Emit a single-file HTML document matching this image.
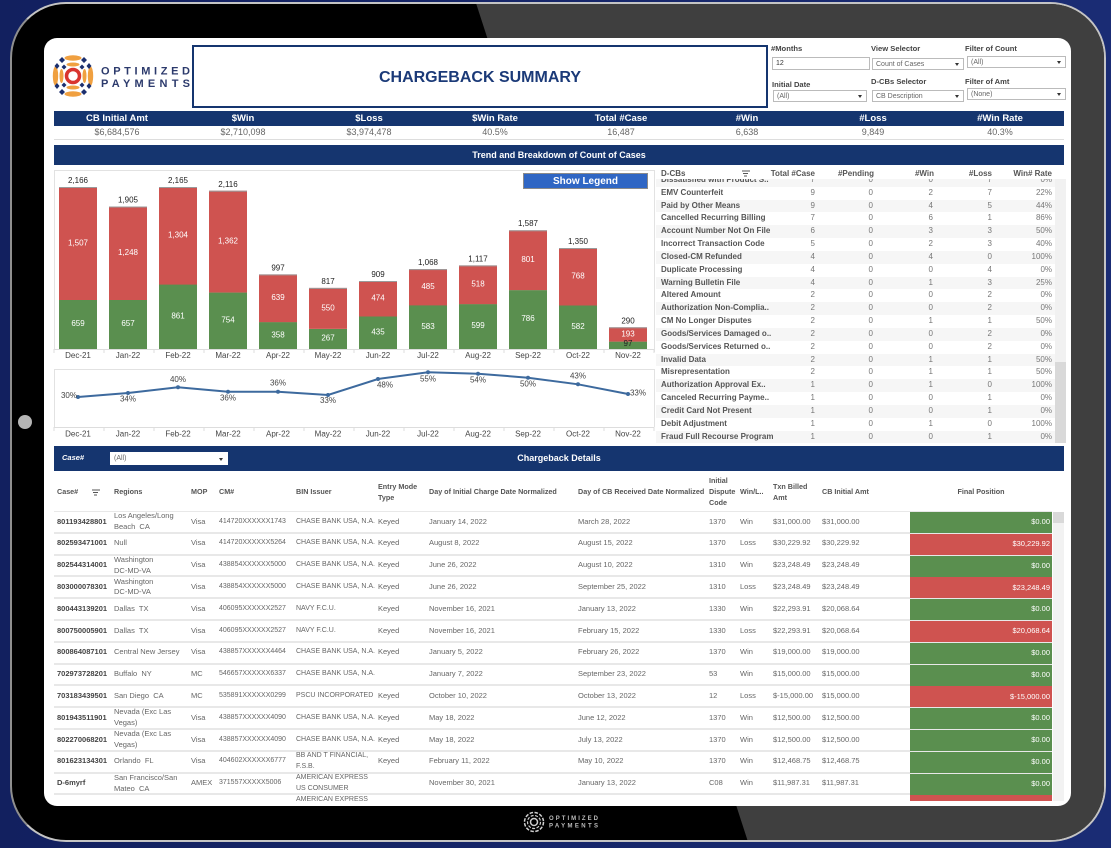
<!DOCTYPE html>
<html><head><meta charset="utf-8"><title>Chargeback Summary</title>
<style>
*{box-sizing:border-box}
html,body{margin:0;padding:0}
body{width:1111px;height:848px;overflow:hidden;position:relative;background:linear-gradient(90deg,#12205f,#1a2c74);font-family:"Liberation Sans",sans-serif;color:#555}
.a{position:absolute}
#tablet{left:10px;top:2px;width:1096px;height:840px;border-radius:56px;border:2.5px solid #c4c4c4;border-left-color:#8f8f8f;overflow:hidden;background:#000}
#screen{left:44px;top:38px;width:1027px;height:768px;background:#fff;border-radius:13px}
#ui{left:0;top:0;width:1111px;height:848px;filter:blur(.35px)}
.navy{background:#15356f;color:#fff}
.lbl{font-size:7.6px;font-weight:bold;color:#444;white-space:nowrap}
.sel{background:#fff;border:1px solid #bbb;font-size:7px;color:#666;padding-left:3px;white-space:nowrap;display:flex;align-items:center}
.sel:after{content:"";position:absolute;right:4px;top:50%;margin-top:-1px;border-left:2.5px solid transparent;border-right:2.5px solid transparent;border-top:3px solid #333}
.sel.n:after{display:none}
.k{top:111px;height:15px;line-height:15px;font-size:9.5px;font-weight:bold;color:#fff;text-align:center;width:126px}
.v{top:126px;height:12px;line-height:12px;font-size:9px;color:#666;text-align:center;width:126px}
.rt{left:656px;top:179px;width:399px;height:264px;overflow:hidden}
.rr{position:relative;height:12.83px;line-height:12.83px;font-size:8px;color:#777}
.rr b{position:absolute;left:5px;color:#555;white-space:nowrap}
.rr i{position:absolute;font-style:normal;text-align:right;width:30px}
.rr i:nth-of-type(1){left:129px}.rr i:nth-of-type(2){left:187px}.rr i:nth-of-type(3){left:247px}.rr i:nth-of-type(4){left:306px}.rr i:nth-of-type(5){left:366px}
.rr.s{background:#f6f6f6}
.rh{top:168px;height:11px;line-height:11px;font-size:8px;font-weight:bold;color:#555;text-align:right;white-space:nowrap}
.th{font-size:7.2px;font-weight:bold;color:#555;line-height:11px;display:flex;align-items:center;top:471px;height:41px;white-space:nowrap}
#rows{left:54px;top:512px;width:1010px;height:289px;overflow:hidden}
.d{position:absolute;left:0;width:998px;height:21.8px;font-size:7.5px;color:#666;line-height:10.7px;border-bottom:2px solid #e8e8e8}
.d span{position:absolute;top:0;height:20px;display:flex;align-items:center;white-space:nowrap}
.d .c1{left:3px;font-weight:bold;color:#444}.d .c2{left:60px}.d .c3{left:137px}.d .c4{left:165px;font-size:7px}.d .c5{left:242px;font-size:7px}.d .c6{left:324px}.d .c7{left:375px}.d .c8{left:524px}.d .c9{left:655px}.d .c10{left:686px}.d .c11{left:719px}.d .c12{left:768px}
.d .f{left:856px;width:142px;height:21px;justify-content:flex-end;padding-right:2px;color:#fff}
.g{background:#5a8f4f}.r{background:#cf5350}
svg text{font-family:"Liberation Sans",sans-serif;dominant-baseline:middle;text-anchor:middle}
</style></head>
<body>
<div class="a" id="tablet">
<svg class="a" style="left:-12.500px;top:-4.500px" width="1111" height="848"><polygon points="475,0 1111,0 1111,848 750,848" fill="#3f3f3f"/></svg>
</div>
<div class="a" style="left:18px;top:415px;width:14px;height:14px;border-radius:50%;background:#b5b5b5"></div>

<div class="a" id="screen"></div>
<div class="a" id="ui">

<!-- logo -->
<svg class="a" style="left:50px;top:52px" width="145" height="48" viewBox="50 52 145 48">
<g fill="#f0a040">
<ellipse cx="73" cy="58" rx="8.500" ry="2.700"/><ellipse cx="73" cy="94" rx="8.500" ry="2.700"/>
<ellipse cx="55.500" cy="76" rx="2.700" ry="9.500"/><ellipse cx="90.500" cy="76" rx="2.700" ry="9.500"/>
<ellipse cx="73" cy="64.500" rx="6.500" ry="2"/><ellipse cx="73" cy="87.500" rx="6.500" ry="2"/>
<ellipse cx="61.500" cy="76" rx="2" ry="7"/><ellipse cx="84.500" cy="76" rx="2" ry="7"/>
</g>
<g fill="#1c2f6e">
<path d="M62 57l3 3-3 3-3-3zM84 57l3 3-3 3-3-3zM57 63l2.500 3-2.500 3-2.500-3zM89 63l2.500 3-2.500 3-2.500-3zM57 83l2.500 3-2.500 3-2.500-3zM89 83l2.500 3-2.500 3-2.500-3zM62 89l3 3-3 3-3-3zM84 89l3 3-3 3-3-3zM64 64.500l2.500 2.500-2.500 2.500-2.500-2.500zM82 64.500l2.500 2.500-2.500 2.500-2.500-2.500zM64 82.500l2.500 2.500-2.500 2.500-2.500-2.500zM82 82.500l2.500 2.500-2.500 2.500-2.500-2.500z"/>
</g>
<circle cx="73" cy="76" r="6.500" fill="#fff" stroke="#d8342f" stroke-width="3.500"/>
<text x="101" y="71.500" style="text-anchor:start" font-size="11" font-weight="bold" fill="#2c3a6c" textLength="89" lengthAdjust="spacing">OPTIMIZED</text>
<text x="101" y="84" style="text-anchor:start" font-size="11" font-weight="bold" fill="#2c3a6c" textLength="89" lengthAdjust="spacing">PAYMENTS</text>
</svg>

<!-- title -->
<div class="a" style="left:192px;top:45px;width:576px;height:63px;border:2px solid #15356f;background:#fff;text-align:center;line-height:62px;font-size:16px;font-weight:bold;color:#1b3a78">CHARGEBACK SUMMARY</div>

<!-- filters -->
<div class="a lbl" style="left:771px;top:44px">#Months</div>
<div class="a sel n" style="left:772px;top:57px;width:98px;height:13px;color:#333">12</div>
<div class="a lbl" style="left:871px;top:44px">View Selector</div>
<div class="a sel" style="left:872px;top:58px;width:92px;height:12px">Count of Cases</div>
<div class="a lbl" style="left:965px;top:44px">Filter of Count</div>
<div class="a sel" style="left:967px;top:56px;width:99px;height:12px">(All)</div>
<div class="a lbl" style="left:772px;top:80px">Initial Date</div>
<div class="a sel" style="left:773px;top:90px;width:94px;height:12px">(All)</div>
<div class="a lbl" style="left:871px;top:77px">D-CBs Selector</div>
<div class="a sel" style="left:872px;top:90px;width:92px;height:12px">CB Description</div>
<div class="a lbl" style="left:965px;top:77px">Filter of Amt</div>
<div class="a sel" style="left:967px;top:88px;width:99px;height:12px">(None)</div>

<!-- KPI -->
<div class="a navy" style="left:54px;top:111px;width:1010px;height:15px"></div>
<div class="a" style="left:54px;top:139px;width:1010px;height:1px;background:#ddd"></div>
<div class="a k" style="left:54px">CB Initial Amt</div><div class="a v" style="left:54px">$6,684,576</div>
<div class="a k" style="left:180px">$Win</div><div class="a v" style="left:180px">$2,710,098</div>
<div class="a k" style="left:306px">$Loss</div><div class="a v" style="left:306px">$3,974,478</div>
<div class="a k" style="left:432px">$Win Rate</div><div class="a v" style="left:432px">40.5%</div>
<div class="a k" style="left:558px">Total #Case</div><div class="a v" style="left:558px">16,487</div>
<div class="a k" style="left:684px">#Win</div><div class="a v" style="left:684px">6,638</div>
<div class="a k" style="left:810px">#Loss</div><div class="a v" style="left:810px">9,849</div>
<div class="a k" style="left:937px">#Win Rate</div><div class="a v" style="left:937px">40.3%</div>

<div class="a navy" style="left:54px;top:145px;width:1010px;height:20px;line-height:20px;text-align:center;font-size:9px;font-weight:bold">Trend and Breakdown of Count of Cases</div>

<!-- charts -->
<svg class="a" style="left:0;top:0" width="1111" height="448">
<path d="M54.500 349V170.500H654.500V352M54.500 427V369.500H654.500V427" fill="none" stroke="#e2e2e2"/>
<path d="M54 349.500H654M54 427.500H654M54 349v4M104 349v4M154 349v4M204 349v4M254 349v4M304 349v4M354 349v4M404 349v4M454 349v4M504 349v4M554 349v4M604 349v4M654 349v4M54 427v4M104 427v4M154 427v4M204 427v4M254 427v4M304 427v4M354 427v4M404 427v4M454 427v4M504 427v4M554 427v4M604 427v4M654 427v4" stroke="#ddd" fill="none"/>
<g fill="#cf5350">
<rect x="59" y="187" width="38" height="113"/><rect x="109" y="206.500" width="38" height="93.500"/><rect x="159" y="187" width="38" height="98"/><rect x="209" y="190.700" width="38" height="102"/><rect x="259" y="274.400" width="38" height="48"/><rect x="309" y="287.900" width="38" height="41"/><rect x="359" y="281" width="38" height="36"/><rect x="409" y="269.100" width="38" height="36.500"/><rect x="459" y="265.400" width="38" height="39"/><rect x="509" y="230.300" width="38" height="60"/><rect x="559" y="248" width="38" height="57.500"/><rect x="609" y="327.300" width="38" height="14.500"/>
</g>
<g fill="#5a8f4f">
<rect x="59" y="300" width="38" height="49"/><rect x="109" y="300" width="38" height="49"/><rect x="159" y="284.600" width="38" height="64.400"/><rect x="209" y="292.600" width="38" height="56.400"/><rect x="259" y="322.200" width="38" height="26.800"/><rect x="309" y="329" width="38" height="20"/><rect x="359" y="316.500" width="38" height="32.500"/><rect x="409" y="305.400" width="38" height="43.600"/><rect x="459" y="304.200" width="38" height="44.800"/><rect x="509" y="290.200" width="38" height="58.800"/><rect x="559" y="305.500" width="38" height="43.500"/><rect x="609" y="341.700" width="38" height="7.300"/>
</g>
<g fill="#9a9a9a">
<rect x="59" y="187" width="38" height="1"/><rect x="109" y="206.500" width="38" height="1"/><rect x="159" y="187" width="38" height="1"/><rect x="209" y="190.700" width="38" height="1"/><rect x="259" y="274.400" width="38" height="1"/><rect x="309" y="287.900" width="38" height="1"/><rect x="359" y="281" width="38" height="1"/><rect x="409" y="269.100" width="38" height="1"/><rect x="459" y="265.400" width="38" height="1"/><rect x="509" y="230.300" width="38" height="1"/><rect x="559" y="248" width="38" height="1"/><rect x="609" y="327.300" width="38" height="1"/>
</g>
<g font-size="8" fill="#222">
<text x="78" y="181">2,166</text><text x="128" y="200.500">1,905</text><text x="178" y="181">2,165</text><text x="228" y="185">2,116</text><text x="278" y="268.500">997</text><text x="328" y="282">817</text><text x="378" y="275">909</text><text x="428" y="263">1,068</text><text x="478" y="259.500">1,117</text><text x="528" y="224">1,587</text><text x="578" y="242">1,350</text><text x="628" y="321.500">290</text><text x="628" y="343.700">97</text>
</g>
<g font-size="8" fill="#fff">
<text x="78" y="243.500">1,507</text><text x="128" y="253">1,248</text><text x="178" y="235.500">1,304</text><text x="228" y="241.500">1,362</text><text x="278" y="298">639</text><text x="328" y="308.500">550</text><text x="378" y="298.500">474</text><text x="428" y="287">485</text><text x="478" y="284.500">518</text><text x="528" y="260">801</text><text x="578" y="276.500">768</text><text x="628" y="334.500">193</text>
<text x="78" y="323.700">659</text><text x="128" y="323.700">657</text><text x="178" y="316.500">861</text><text x="228" y="320.500">754</text><text x="278" y="335.500">358</text><text x="328" y="338.500">267</text><text x="378" y="332.500">435</text><text x="428" y="327">583</text><text x="478" y="326">599</text><text x="528" y="319">786</text><text x="578" y="327">582</text>
</g>
<g font-size="8" fill="#444">
<text x="78" y="356">Dec-21</text><text x="128" y="356">Jan-22</text><text x="178" y="356">Feb-22</text><text x="228" y="356">Mar-22</text><text x="278" y="356">Apr-22</text><text x="328" y="356">May-22</text><text x="378" y="356">Jun-22</text><text x="428" y="356">Jul-22</text><text x="478" y="356">Aug-22</text><text x="528" y="356">Sep-22</text><text x="578" y="356">Oct-22</text><text x="628" y="356">Nov-22</text>
<text x="78" y="434.500">Dec-21</text><text x="128" y="434.500">Jan-22</text><text x="178" y="434.500">Feb-22</text><text x="228" y="434.500">Mar-22</text><text x="278" y="434.500">Apr-22</text><text x="328" y="434.500">May-22</text><text x="378" y="434.500">Jun-22</text><text x="428" y="434.500">Jul-22</text><text x="478" y="434.500">Aug-22</text><text x="528" y="434.500">Sep-22</text><text x="578" y="434.500">Oct-22</text><text x="628" y="434.500">Nov-22</text>
</g>
<polyline points="78,397 128,393 178,387.300 228,391.700 278,391.700 328,395 378,379 428,372.300 478,373.700 528,377.700 578,384.300 628,394" fill="none" stroke="#3d6a9e" stroke-width="2"/>
<g fill="#3d6a9e"><circle cx="78" cy="397" r="2"/><circle cx="128" cy="393" r="2"/><circle cx="178" cy="387.300" r="2"/><circle cx="228" cy="391.700" r="2"/><circle cx="278" cy="391.700" r="2"/><circle cx="328" cy="395" r="2"/><circle cx="378" cy="379" r="2"/><circle cx="428" cy="372.300" r="2"/><circle cx="478" cy="373.700" r="2"/><circle cx="528" cy="377.700" r="2"/><circle cx="578" cy="384.300" r="2"/><circle cx="628" cy="394" r="2"/></g>
<g font-size="8" fill="#444">
<text x="69" y="396">30%</text><text x="128" y="399.500">34%</text><text x="178" y="380">40%</text><text x="228" y="398.500">36%</text><text x="278" y="383.500">36%</text><text x="328" y="401">33%</text><text x="385" y="385.500">48%</text><text x="428" y="379.500">55%</text><text x="478" y="380.500">54%</text><text x="528" y="384.500">50%</text><text x="578" y="376.500">43%</text><text x="638" y="393.500">33%</text>
</g>
<rect x="523.500" y="173.500" width="124" height="15" fill="#2f66c4" stroke="#8a8a8a"/>
<text x="585.500" y="181.500" font-size="10" font-weight="bold" fill="#fff">Show Legend</text>
</svg>

<!-- right table -->
<div class="a rh" style="left:661px">D-CBs</div>
<svg class="a" style="left:742px;top:170px" width="9" height="8"><path d="M0 1h8M1 3.500h5M2 6h3" stroke="#555" fill="none"/></svg>
<div class="a rh" style="left:755px;width:60px">Total #Case</div>
<div class="a rh" style="left:815px;width:59px">#Pending</div>
<div class="a rh" style="left:880px;width:54px">#Win</div>
<div class="a rh" style="left:940px;width:52px">#Loss</div>
<div class="a rh" style="left:1000px;width:52px">Win# Rate</div>
<div class="a" style="left:1055px;top:179px;width:11px;height:264px;background:#f1f1f1"></div>
<div class="a" style="left:1055px;top:362px;width:11px;height:81px;background:#d9d9d9"></div>
<div class="a rt"><div style="margin-top:-5px">
<div class="rr s"><b>Dissatisfied with Product S..</b><i>7</i><i>0</i><i>0</i><i>7</i><i>0%</i></div>
<div class="rr"><b>EMV Counterfeit</b><i>9</i><i>0</i><i>2</i><i>7</i><i>22%</i></div>
<div class="rr s"><b>Paid by Other Means</b><i>9</i><i>0</i><i>4</i><i>5</i><i>44%</i></div>
<div class="rr"><b>Cancelled Recurring Billing</b><i>7</i><i>0</i><i>6</i><i>1</i><i>86%</i></div>
<div class="rr s"><b>Account Number Not On File</b><i>6</i><i>0</i><i>3</i><i>3</i><i>50%</i></div>
<div class="rr"><b>Incorrect Transaction Code</b><i>5</i><i>0</i><i>2</i><i>3</i><i>40%</i></div>
<div class="rr s"><b>Closed-CM Refunded</b><i>4</i><i>0</i><i>4</i><i>0</i><i>100%</i></div>
<div class="rr"><b>Duplicate Processing</b><i>4</i><i>0</i><i>0</i><i>4</i><i>0%</i></div>
<div class="rr s"><b>Warning Bulletin File</b><i>4</i><i>0</i><i>1</i><i>3</i><i>25%</i></div>
<div class="rr"><b>Altered Amount</b><i>2</i><i>0</i><i>0</i><i>2</i><i>0%</i></div>
<div class="rr s"><b>Authorization Non-Complia..</b><i>2</i><i>0</i><i>0</i><i>2</i><i>0%</i></div>
<div class="rr"><b>CM No Longer Disputes</b><i>2</i><i>0</i><i>1</i><i>1</i><i>50%</i></div>
<div class="rr s"><b>Goods/Services Damaged o..</b><i>2</i><i>0</i><i>0</i><i>2</i><i>0%</i></div>
<div class="rr"><b>Goods/Services Returned o..</b><i>2</i><i>0</i><i>0</i><i>2</i><i>0%</i></div>
<div class="rr s"><b>Invalid Data</b><i>2</i><i>0</i><i>1</i><i>1</i><i>50%</i></div>
<div class="rr"><b>Misrepresentation</b><i>2</i><i>0</i><i>1</i><i>1</i><i>50%</i></div>
<div class="rr s"><b>Authorization Approval Ex..</b><i>1</i><i>0</i><i>1</i><i>0</i><i>100%</i></div>
<div class="rr"><b>Canceled Recurring Payme..</b><i>1</i><i>0</i><i>0</i><i>1</i><i>0%</i></div>
<div class="rr s"><b>Credit Card Not Present</b><i>1</i><i>0</i><i>0</i><i>1</i><i>0%</i></div>
<div class="rr"><b>Debit Adjustment</b><i>1</i><i>0</i><i>1</i><i>0</i><i>100%</i></div>
<div class="rr s"><b>Fraud Full Recourse Program</b><i>1</i><i>0</i><i>0</i><i>1</i><i>0%</i></div>
</div></div>

<!-- details bar -->
<div class="a navy" style="left:54px;top:446px;width:1010px;height:25px;line-height:25px;text-align:center;font-size:9px;font-weight:bold">Chargeback Details</div>
<div class="a" style="left:62px;top:453px;font-size:7.5px;font-weight:bold;font-style:italic;color:#fff">Case#</div>
<div class="a sel" style="left:110px;top:452px;width:118px;height:13px;border-color:#fff">(All)</div>

<!-- details header -->
<div class="a th" style="left:57px">Case#</div>
<svg class="a" style="left:92px;top:489px" width="9" height="8"><path d="M0 1h8M1 3.500h5M2 6h3" stroke="#555" fill="none"/></svg>
<div class="a th" style="left:114px">Regions</div>
<div class="a th" style="left:191px">MOP</div>
<div class="a th" style="left:219px">CM#</div>
<div class="a th" style="left:296px">BIN Issuer</div>
<div class="a th" style="left:378px">Entry Mode<br>Type</div>
<div class="a th" style="left:429px">Day of Initial Charge Date Normalized</div>
<div class="a th" style="left:578px">Day of CB Received Date Normalized</div>
<div class="a th" style="left:709px">Initial<br>Dispute<br>Code</div>
<div class="a th" style="left:740px">Win/L..</div>
<div class="a th" style="left:773px">Txn Billed<br>Amt</div>
<div class="a th" style="left:822px">CB Initial Amt</div>
<div class="a th" style="left:910px;width:142px;justify-content:center">Final Position</div>
<div class="a" style="left:54px;top:511px;width:998px;height:1px;background:#e8e8e8"></div>

<div class="a" style="left:1053px;top:512px;width:11px;height:289px;background:#f2f2f2"></div>
<div class="a" style="left:1053px;top:512px;width:11px;height:11px;background:#d9d9d9"></div>

<div class="a" id="rows">
<div class="d" style="top:0"><span class="c1">801193428801</span><span class="c2">Los Angeles/Long<br>Beach&nbsp; CA</span><span class="c3">Visa</span><span class="c4">414720XXXXXX1743</span><span class="c5">CHASE BANK USA, N.A.</span><span class="c6">Keyed</span><span class="c7">January 14, 2022</span><span class="c8">March 28, 2022</span><span class="c9">1370</span><span class="c10">Win</span><span class="c11">$31,000.00</span><span class="c12">$31,000.00</span><span class="f g">$0.00</span></div>
<div class="d" style="top:21.800px"><span class="c1">802593471001</span><span class="c2">Null</span><span class="c3">Visa</span><span class="c4">414720XXXXXX5264</span><span class="c5">CHASE BANK USA, N.A.</span><span class="c6">Keyed</span><span class="c7">August 8, 2022</span><span class="c8">August 15, 2022</span><span class="c9">1370</span><span class="c10">Loss</span><span class="c11">$30,229.92</span><span class="c12">$30,229.92</span><span class="f r">$30,229.92</span></div>
<div class="d" style="top:43.600px"><span class="c1">802544314001</span><span class="c2">Washington<br>DC-MD-VA</span><span class="c3">Visa</span><span class="c4">438854XXXXXX5000</span><span class="c5">CHASE BANK USA, N.A.</span><span class="c6">Keyed</span><span class="c7">June 26, 2022</span><span class="c8">August 10, 2022</span><span class="c9">1310</span><span class="c10">Win</span><span class="c11">$23,248.49</span><span class="c12">$23,248.49</span><span class="f g">$0.00</span></div>
<div class="d" style="top:65.400px"><span class="c1">803000078301</span><span class="c2">Washington<br>DC-MD-VA</span><span class="c3">Visa</span><span class="c4">438854XXXXXX5000</span><span class="c5">CHASE BANK USA, N.A.</span><span class="c6">Keyed</span><span class="c7">June 26, 2022</span><span class="c8">September 25, 2022</span><span class="c9">1310</span><span class="c10">Loss</span><span class="c11">$23,248.49</span><span class="c12">$23,248.49</span><span class="f r">$23,248.49</span></div>
<div class="d" style="top:87.200px"><span class="c1">800443139201</span><span class="c2">Dallas&nbsp; TX</span><span class="c3">Visa</span><span class="c4">406095XXXXXX2527</span><span class="c5">NAVY F.C.U.</span><span class="c6">Keyed</span><span class="c7">November 16, 2021</span><span class="c8">January 13, 2022</span><span class="c9">1330</span><span class="c10">Win</span><span class="c11">$22,293.91</span><span class="c12">$20,068.64</span><span class="f g">$0.00</span></div>
<div class="d" style="top:109px"><span class="c1">800750005901</span><span class="c2">Dallas&nbsp; TX</span><span class="c3">Visa</span><span class="c4">406095XXXXXX2527</span><span class="c5">NAVY F.C.U.</span><span class="c6">Keyed</span><span class="c7">November 16, 2021</span><span class="c8">February 15, 2022</span><span class="c9">1330</span><span class="c10">Loss</span><span class="c11">$22,293.91</span><span class="c12">$20,068.64</span><span class="f r">$20,068.64</span></div>
<div class="d" style="top:130.800px"><span class="c1">800864087101</span><span class="c2">Central New Jersey</span><span class="c3">Visa</span><span class="c4">438857XXXXXX4464</span><span class="c5">CHASE BANK USA, N.A.</span><span class="c6">Keyed</span><span class="c7">January 5, 2022</span><span class="c8">February 26, 2022</span><span class="c9">1370</span><span class="c10">Win</span><span class="c11">$19,000.00</span><span class="c12">$19,000.00</span><span class="f g">$0.00</span></div>
<div class="d" style="top:152.600px"><span class="c1">702973728201</span><span class="c2">Buffalo&nbsp; NY</span><span class="c3">MC</span><span class="c4">546657XXXXXX6337</span><span class="c5">CHASE BANK USA, N.A.</span><span class="c7">January 7, 2022</span><span class="c8">September 23, 2022</span><span class="c9">53</span><span class="c10">Win</span><span class="c11">$15,000.00</span><span class="c12">$15,000.00</span><span class="f g">$0.00</span></div>
<div class="d" style="top:174.400px"><span class="c1">703183439501</span><span class="c2">San Diego&nbsp; CA</span><span class="c3">MC</span><span class="c4">535891XXXXXX0299</span><span class="c5">PSCU INCORPORATED</span><span class="c6">Keyed</span><span class="c7">October 10, 2022</span><span class="c8">October 13, 2022</span><span class="c9">12</span><span class="c10">Loss</span><span class="c11">$-15,000.00</span><span class="c12">$15,000.00</span><span class="f r">$-15,000.00</span></div>
<div class="d" style="top:196.200px"><span class="c1">801943511901</span><span class="c2">Nevada (Exc Las<br>Vegas)</span><span class="c3">Visa</span><span class="c4">438857XXXXXX4090</span><span class="c5">CHASE BANK USA, N.A.</span><span class="c6">Keyed</span><span class="c7">May 18, 2022</span><span class="c8">June 12, 2022</span><span class="c9">1370</span><span class="c10">Win</span><span class="c11">$12,500.00</span><span class="c12">$12,500.00</span><span class="f g">$0.00</span></div>
<div class="d" style="top:218px"><span class="c1">802270068201</span><span class="c2">Nevada (Exc Las<br>Vegas)</span><span class="c3">Visa</span><span class="c4">438857XXXXXX4090</span><span class="c5">CHASE BANK USA, N.A.</span><span class="c6">Keyed</span><span class="c7">May 18, 2022</span><span class="c8">July 13, 2022</span><span class="c9">1370</span><span class="c10">Win</span><span class="c11">$12,500.00</span><span class="c12">$12,500.00</span><span class="f g">$0.00</span></div>
<div class="d" style="top:239.800px"><span class="c1">801623134301</span><span class="c2">Orlando&nbsp; FL</span><span class="c3">Visa</span><span class="c4">404602XXXXXX6777</span><span class="c5">BB AND T FINANCIAL,<br>F.S.B.</span><span class="c6">Keyed</span><span class="c7">February 11, 2022</span><span class="c8">May 10, 2022</span><span class="c9">1370</span><span class="c10">Win</span><span class="c11">$12,468.75</span><span class="c12">$12,468.75</span><span class="f g">$0.00</span></div>
<div class="d" style="top:261.600px"><span class="c1">D-6myrf</span><span class="c2">San Francisco/San<br>Mateo&nbsp; CA</span><span class="c3">AMEX</span><span class="c4">371557XXXXX5006</span><span class="c5">AMERICAN EXPRESS<br>US CONSUMER</span><span class="c7">November 30, 2021</span><span class="c8">January 13, 2022</span><span class="c9">C08</span><span class="c10">Win</span><span class="c11">$11,987.31</span><span class="c12">$11,987.31</span><span class="f g">$0.00</span></div>
<div class="d" style="top:283.400px;border:0"><span class="c5" style="align-items:flex-start">AMERICAN EXPRESS</span><span class="f r"></span></div>
</div>

<!-- bottom logo -->
<svg class="a" style="left:520px;top:808px" width="85" height="28" viewBox="520 808 85 28">
<g fill="none" stroke="#cfcfcf">
<circle cx="534" cy="822" r="3.500" stroke-width="1.500"/>
<circle cx="534" cy="822" r="6.500" stroke-width="1.200" stroke-dasharray="3 1.500"/>
<circle cx="534" cy="822" r="9.500" stroke-width="1.500" stroke-dasharray="3.500 1.500"/>
</g>
<text x="549" y="818.500" style="text-anchor:start" font-size="6" font-weight="bold" fill="#bdbdbd" textLength="49" lengthAdjust="spacing">OPTIMIZED</text>
<text x="549" y="826" style="text-anchor:start" font-size="6" font-weight="bold" fill="#bdbdbd" textLength="49" lengthAdjust="spacing">PAYMENTS</text>
</svg>
</div>
</body></html>
